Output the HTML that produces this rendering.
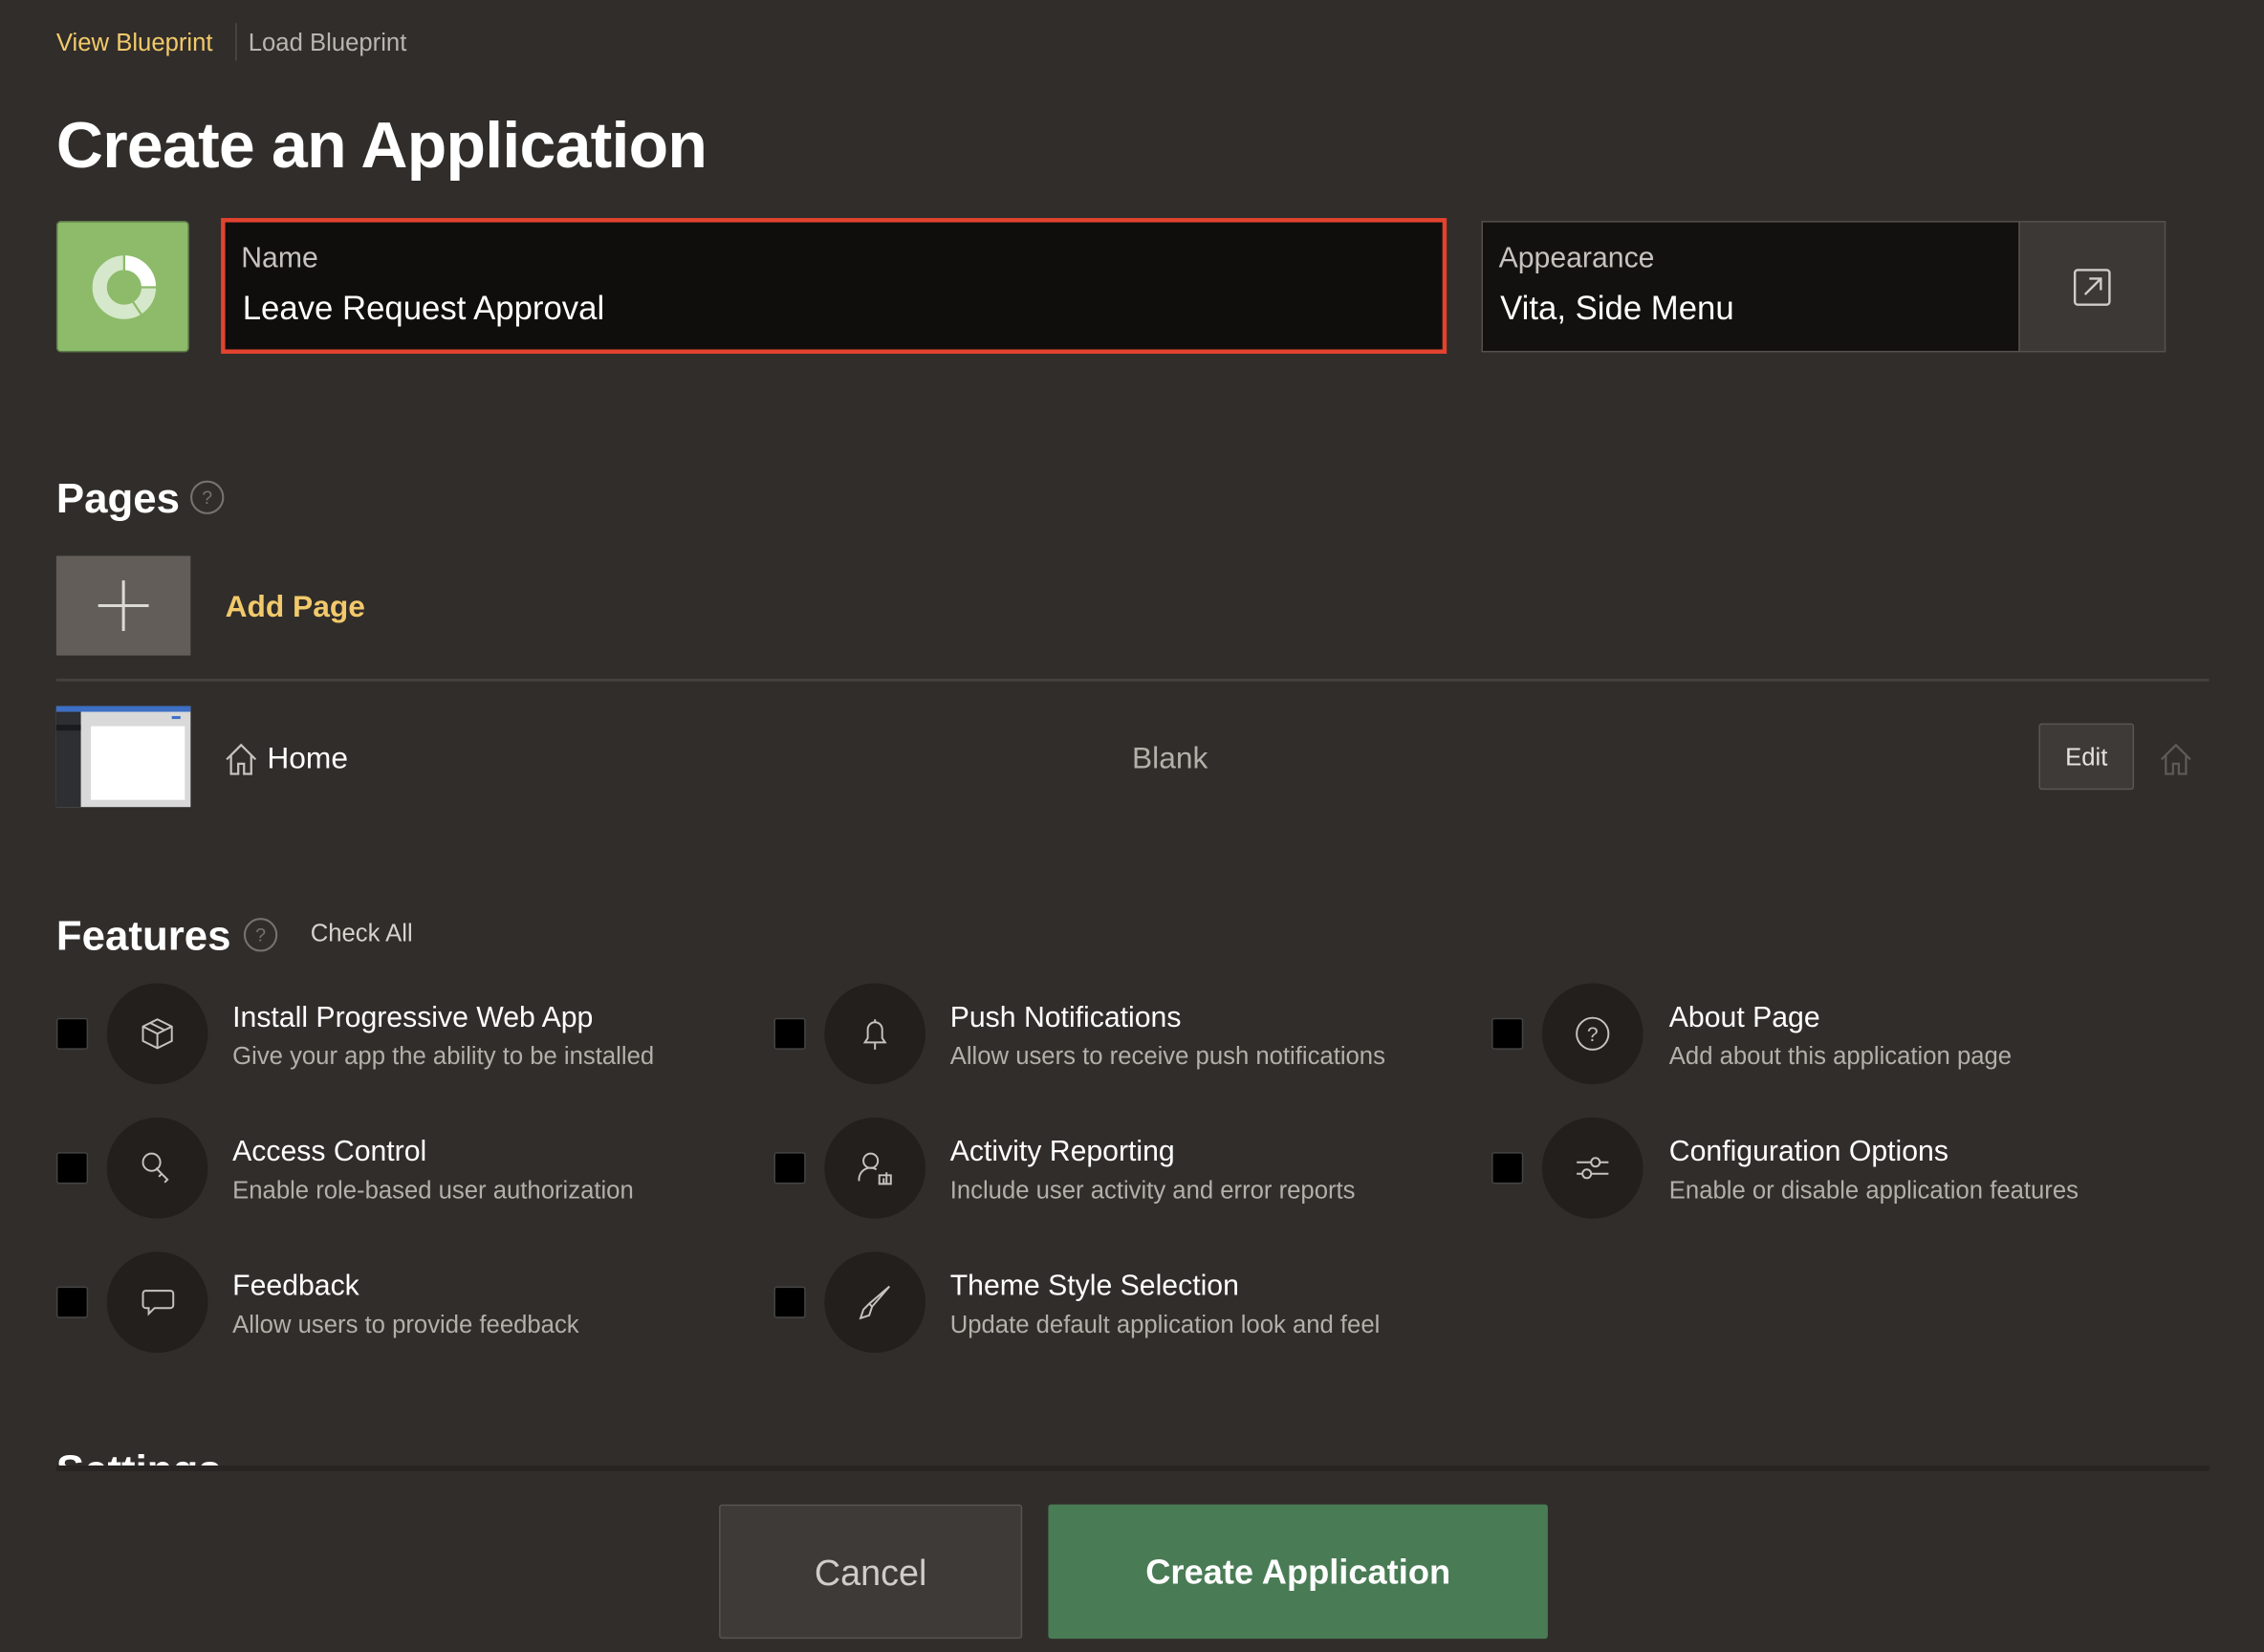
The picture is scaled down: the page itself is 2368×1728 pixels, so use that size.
<!DOCTYPE html>
<html><head><meta charset="utf-8"><style>
html,body{margin:0;padding:0;background:#312d2a;width:2368px;height:1728px;overflow:hidden}
#w{position:absolute;left:0;top:0;width:1568px;height:1144px;transform:scale(1.5102);transform-origin:0 0;font-family:"Liberation Sans",sans-serif;color:#fff}
.a{position:absolute;white-space:nowrap}
.cb{position:absolute;width:20px;height:20px;background:#000;border:1px solid #444;border-radius:2px}
.ci{position:absolute;width:70px;height:70px;border-radius:50%;background:#221f1d}
.ci svg{position:absolute;left:22px;top:22px}
.t{font-size:20px;color:#fff}
.d{font-size:17px;color:#b3afa9}
</style></head><body><div id="w">
<div class="a" style="left:39px;top:20px;font-size:17px;color:#f2ca6b">View Blueprint</div>
<div class="a" style="left:163px;top:16px;width:1px;height:26px;background:#4d4945"></div>
<div class="a" style="left:172px;top:20px;font-size:17px;color:#b9b5b0">Load Blueprint</div>
<div class="a" style="left:39px;top:75px;font-size:45px;font-weight:bold;letter-spacing:-0.5px">Create an Application</div>

<div class="a" style="left:39px;top:153px;width:90px;height:89px;background:#8dbb6a;border:1px solid #5f7d4a;border-radius:3px">
<svg width="90" height="89" style="position:absolute;left:0;top:0"><circle cx="46" cy="45" r="17" fill="none" stroke="#d6e8cb" stroke-width="10"/><path d="M46 28 A17 17 0 0 1 63 45" fill="none" stroke="#fff" stroke-width="10"/><line x1="46" y1="22" x2="46" y2="34" stroke="#8dbb6a" stroke-width="1.5"/><line x1="57" y1="45" x2="69" y2="45" stroke="#8dbb6a" stroke-width="1.5"/><line x1="52" y1="55" x2="58" y2="64" stroke="#8dbb6a" stroke-width="1.5"/></svg></div>

<div class="a" style="left:153px;top:151px;width:843px;height:88px;background:#0f0e0d;border:3px solid #e1432f"></div>
<div class="a" style="left:167px;top:168px;font-size:20px;color:#c6c2bd">Name</div>
<div class="a" style="left:168px;top:200px;font-size:23px;color:#fff">Leave Request Approval</div>

<div class="a" style="left:1026px;top:153px;width:372px;height:89px;background:#121110;border:1px solid #55514d;border-right:none"></div>
<div class="a" style="left:1038px;top:168px;font-size:20px;color:#c6c2bd">Appearance</div>
<div class="a" style="left:1039px;top:200px;font-size:23px;color:#fff">Vita, Side Menu</div>
<div class="a" style="left:1398px;top:153px;width:100px;height:89px;background:#3b3835;border:1px solid #55514d">
<svg width="30" height="30" style="position:absolute;left:36px;top:30px" fill="none" stroke="#d0ccc7" stroke-width="1.6"><rect x="2" y="3" width="24" height="24" rx="2"/><path d="M9 20 L20 9 M12 9 H20 V17"/></svg></div>

<div class="a" style="left:39px;top:330px;font-size:29px;font-weight:bold">Pages</div>
<svg class="a" style="left:131px;top:332px" width="25" height="25" fill="none" stroke="#77726d" stroke-width="1.4"><circle cx="12.5" cy="12.5" r="11"/><text x="12.5" y="17" font-size="13" fill="#77726d" stroke="none" text-anchor="middle" font-family="Liberation Sans">?</text></svg>
<div class="a" style="left:39px;top:385px;width:93px;height:69px;background:#625d58">
<svg width="93" height="69" stroke="#ddd9d4" stroke-width="2"><path d="M46.5 17 V52 M29 34.5 H64"/></svg></div>
<div class="a" style="left:156px;top:409px;font-size:21px;font-weight:bold;color:#f2ca6b">Add Page</div>
<div class="a" style="left:39px;top:470px;width:1491px;height:2px;background:#45413e"></div>

<div class="a" style="left:39px;top:489px;width:93px;height:70px;background:#d9d9d9">
<div style="position:absolute;left:0;top:0;width:93px;height:4px;background:#3d6fc4"></div>
<div style="position:absolute;left:0;top:4px;width:17px;height:66px;background:#2d2f33"></div>
<div style="position:absolute;left:0;top:13px;width:17px;height:4px;background:#1a1b1e"></div>
<div style="position:absolute;left:24px;top:14px;width:65px;height:51px;background:#fff"></div>
<div style="position:absolute;left:80px;top:7px;width:6px;height:2px;background:#3d6fc4"></div></div>
<svg class="a" style="left:155px;top:514px" width="24" height="24" fill="none" stroke="#c6c2bd" stroke-width="1.5"><path d="M2 12 L12 2 L22 12 M5 9 V22 H10 V15 H14 V22 H19 V9"/></svg>
<div class="a" style="left:185px;top:514px;font-size:21px">Home</div>
<div class="a" style="left:784px;top:514px;font-size:21px;color:#b3afa9">Blank</div>
<div class="a" style="left:1412px;top:501px;width:64px;height:44px;background:#3d3a37;border:1px solid #5a5652;border-radius:2px;font-size:17px;color:#e6e2dd;text-align:center;line-height:46px">Edit</div>
<svg class="a" style="left:1495px;top:514px" width="24" height="24" fill="none" stroke="#5f5a55" stroke-width="1.5"><path d="M2 12 L12 2 L22 12 M5 9 V22 H10 V15 H14 V22 H19 V9"/></svg>

<div class="a" style="left:39px;top:633px;font-size:29px;font-weight:bold">Features</div>
<svg class="a" style="left:168px;top:635px" width="25" height="25" fill="none" stroke="#77726d" stroke-width="1.4"><circle cx="12.5" cy="12.5" r="11"/><text x="12.5" y="17" font-size="13" fill="#77726d" stroke="none" text-anchor="middle" font-family="Liberation Sans">?</text></svg>
<div class="a" style="left:215px;top:637px;font-size:17px;color:#d6d2cd">Check All</div>

<div class="cb" style="left:39px;top:705px"></div>
<div class="ci" style="left:74px;top:681px"><svg width="26" height="26" fill="none" stroke="#c6c2bd" stroke-width="1.3"><path d="M13 3 L23 8 V18 L13 23 L3 18 V8 Z M3 8 L13 13 L23 8 M13 13 V23 M8 5.5 L18 10.5"/></svg></div>
<div class="a t" style="left:161px;top:694px">Install Progressive Web App</div>
<div class="a d" style="left:161px;top:722px">Give your app the ability to be installed</div>

<div class="cb" style="left:536px;top:705px"></div>
<div class="ci" style="left:571px;top:681px"><svg width="26" height="26" fill="none" stroke="#c6c2bd" stroke-width="1.3"><path d="M6 19 H20 L18 16 V10 A5 5 0 0 0 8 10 V16 Z M13 5 V3 M13 19 V24"/></svg></div>
<div class="a t" style="left:658px;top:694px">Push Notifications</div>
<div class="a d" style="left:658px;top:722px">Allow users to receive push notifications</div>

<div class="cb" style="left:1033px;top:705px"></div>
<div class="ci" style="left:1068px;top:681px"><svg width="26" height="26" fill="none" stroke="#c6c2bd" stroke-width="1.3"><circle cx="13" cy="13" r="11"/><text x="13" y="18" font-size="14" fill="#c6c2bd" stroke="none" text-anchor="middle" font-family="Liberation Sans">?</text></svg></div>
<div class="a t" style="left:1156px;top:694px">About Page</div>
<div class="a d" style="left:1156px;top:722px">Add about this application page</div>

<div class="cb" style="left:39px;top:798px"></div>
<div class="ci" style="left:74px;top:774px"><svg width="26" height="26" fill="none" stroke="#c6c2bd" stroke-width="1.3"><circle cx="9" cy="9" r="6"/><path d="M12 13 L20 21 L18 23 M16 17 L14 19"/></svg></div>
<div class="a t" style="left:161px;top:787px">Access Control</div>
<div class="a d" style="left:161px;top:815px">Enable role-based user authorization</div>

<div class="cb" style="left:536px;top:798px"></div>
<div class="ci" style="left:571px;top:774px"><svg width="26" height="26" fill="none" stroke="#c6c2bd" stroke-width="1.3"><circle cx="10" cy="8" r="5"/><path d="M2 22 A8 8 0 0 1 14 14 M16 24 V18 H24 V24 Z M19 24 V20 M21 24 V16"/></svg></div>
<div class="a t" style="left:658px;top:787px">Activity Reporting</div>
<div class="a d" style="left:658px;top:815px">Include user activity and error reports</div>

<div class="cb" style="left:1033px;top:798px"></div>
<div class="ci" style="left:1068px;top:774px"><svg width="26" height="26" fill="none" stroke="#c6c2bd" stroke-width="1.3"><path d="M2 9 H12 M18 9 H24 M2 17 H6 M12 17 H24"/><circle cx="15" cy="9" r="3"/><circle cx="9" cy="17" r="3"/></svg></div>
<div class="a t" style="left:1156px;top:787px">Configuration Options</div>
<div class="a d" style="left:1156px;top:815px">Enable or disable application features</div>

<div class="cb" style="left:39px;top:891px"></div>
<div class="ci" style="left:74px;top:867px"><svg width="26" height="26" fill="none" stroke="#c6c2bd" stroke-width="1.3"><path d="M5 5 H22 A2 2 0 0 1 24 7 V15 A2 2 0 0 1 22 17 H11 L7 21 V17 H5 A2 2 0 0 1 3 15 V7 A2 2 0 0 1 5 5 Z"/></svg></div>
<div class="a t" style="left:161px;top:880px">Feedback</div>
<div class="a d" style="left:161px;top:908px">Allow users to provide feedback</div>

<div class="cb" style="left:536px;top:891px"></div>
<div class="ci" style="left:571px;top:867px"><svg width="26" height="26" fill="none" stroke="#c6c2bd" stroke-width="1.3"><path d="M23 2 L11 16 L9 14 Z M9 14 L5 18 L3 24 L9 22 L11 16"/></svg></div>
<div class="a t" style="left:658px;top:880px">Theme Style Selection</div>
<div class="a d" style="left:658px;top:908px">Update default application look and feel</div>

<div class="a" style="left:0;top:994px;width:1568px;height:22px;overflow:hidden">
<div class="a" style="left:39px;top:9px;font-size:29px;font-weight:bold">Settings</div></div>
<div class="a" style="left:39px;top:1015px;width:1491px;height:4px;background:#272421"></div>

<div class="a" style="left:498px;top:1042px;width:208px;height:91px;background:#3d3a37;border:1px solid #575350;border-radius:2px;font-size:25px;color:#d0ccc7;text-align:center;line-height:94px">Cancel</div>
<div class="a" style="left:726px;top:1042px;width:346px;height:93px;background:#497b55;border-radius:2px;font-size:24px;font-weight:bold;color:#fff;text-align:center;line-height:96px">Create Application</div>
</div></body></html>
